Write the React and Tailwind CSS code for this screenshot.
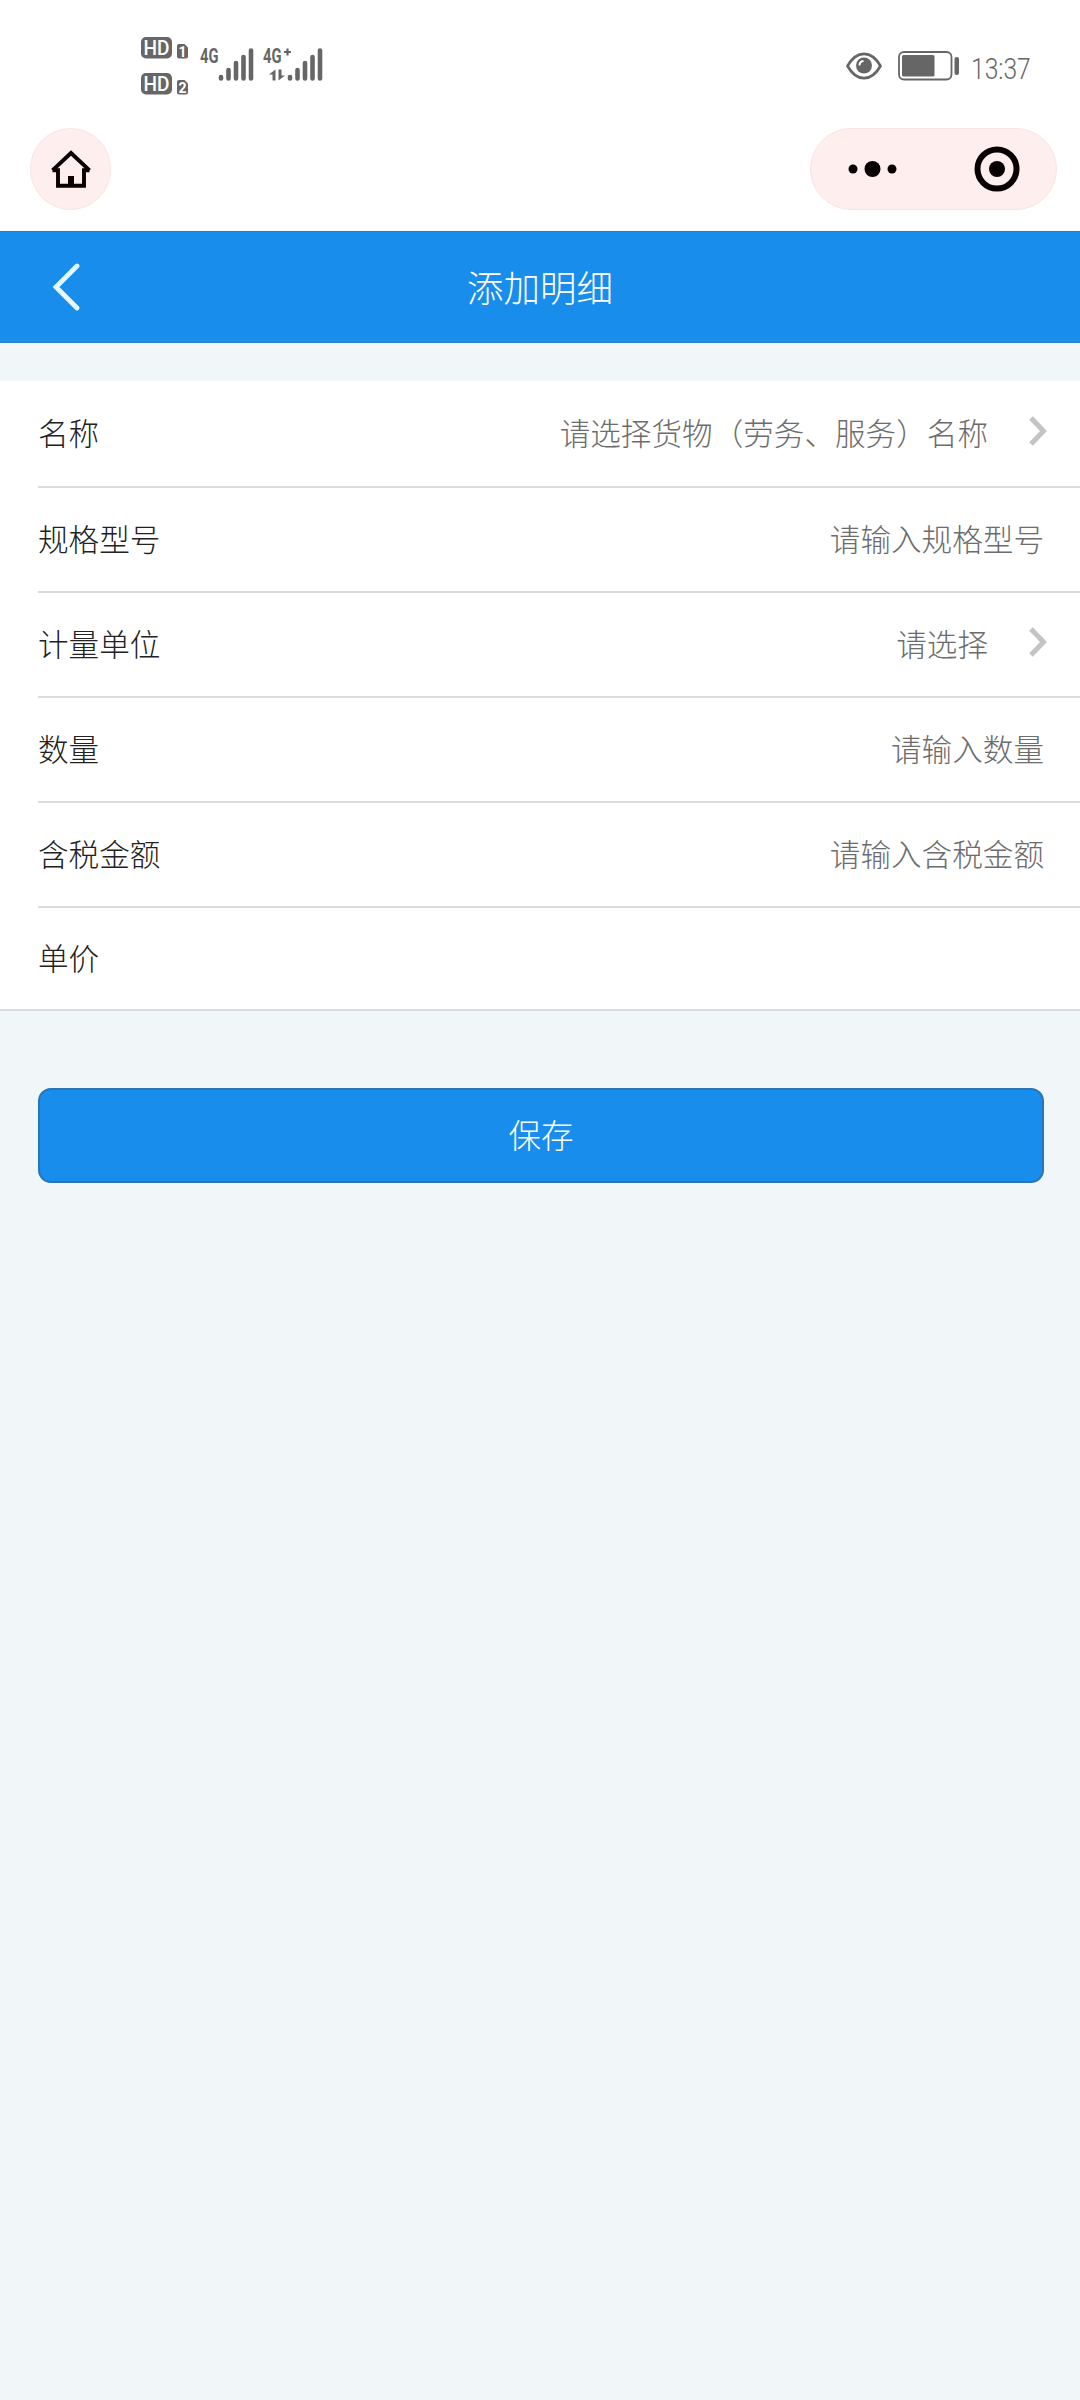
const rows = [
  { label: '名称', hint: '请选择货物（劳务、服务）名称', select: true, box: 'h-[107px] border-b-2' },
  { label: '规格型号', hint: '请输入规格型号', box: 'h-[105px] border-b-2' },
  { label: '计量单位', hint: '请选择', select: true, box: 'h-[105px] border-b-2' },
  { label: '数量', hint: '请输入数量', box: 'h-[105px] border-b-2' },
  { label: '含税金额', hint: '请输入含税金额', box: 'h-[105px] border-b-2' },
  { label: '单价', hint: '', box: 'h-[101px]' },
];

function SimBadge({ y, n }) {
  return (
    <g>
      <rect x="21" y={y} width="31" height="21.5" rx="5" fill="#666" />
      <text x="36.5" y={y + 17.5} fontSize="19.500" fontWeight="500" fill="#fff" textAnchor="middle" textLength="26" lengthAdjust="spacingAndGlyphs">HD</text>
      <path d={`M57 ${y + 9}q0-2 2-2h5.500l3.500 3.500v9q0 2-2 2h-7q-2 0-2-2z`} fill="#666" />
      <text x="62.500" y={y + 19.500} fontSize="14" fontWeight="700" fill="#fff" textAnchor="middle">{n}</text>
    </g>
  );
}

function Bars({ x }) {
  return (
    <g stroke="#666" strokeWidth="4.600" strokeLinecap="round">
      <path d={`M${x} 57v1.500M${x + 7.5} 50v8.500M${x + 15} 43v15.500M${x + 22.5} 37v21.500M${x + 30} 30.500v28`} />
    </g>
  );
}

function Signals() {
  return (
    <svg width="220" height="90" className="font-['Roboto','Liberation_Sans',sans-serif]">
      <SimBadge y={17} n="1" />
      <SimBadge y={53} n="2" />
      <text x="80" y="42.500" fontSize="20" fontWeight="700" fill="#666" textLength="18.500" lengthAdjust="spacingAndGlyphs">4G</text>
      <Bars x={101} />
      <text x="143" y="42.500" fontSize="20" fontWeight="700" fill="#666" textLength="18.500" lengthAdjust="spacingAndGlyphs">4G</text>
      <path d="M164 32h7M167.500 28.500v7" stroke="#666" strokeWidth="2.200" />
      <path d="M155.500 49.500v11h-3v-6h-3.500zM158.500 49.500v11l6.500-5h-3.500v-6z" fill="#666" />
      <Bars x={170} />
    </svg>
  );
}

function Eye() {
  return (
    <svg width="36" height="30" viewBox="0 0 36 30" fill="none">
      <path d="M1.500 15C6 7 11.500 2.800 18 2.800S30 7 34.500 15C30 23 24.500 27.200 18 27.200S6 23 1.500 15z" stroke="#666" strokeWidth="2.700" strokeLinejoin="round" />
      <circle cx="18" cy="14.500" r="8" fill="#666" />
      <path d="M13.500 14.500a4.500 4.500 0 0 1 4-4.500" stroke="#fff" strokeWidth="2" />
    </svg>
  );
}

function Battery() {
  return (
    <svg width="62" height="30" viewBox="0 0 62 30" fill="none">
      <rect x="1" y="1" width="52.500" height="27.500" rx="5" stroke="#666" strokeWidth="1.800" />
      <rect x="4" y="4" width="32.500" height="21.500" rx="1.500" fill="#666" />
      <rect x="56.500" y="6" width="4.500" height="18" rx="2" fill="#666" />
    </svg>
  );
}

export default function App() {
  return (
    <div className="flex h-[2400px] w-[1080px] flex-col overflow-hidden bg-[#f1f6f9] font-['Noto_Sans_CJK_SC',sans-serif] font-light">
      <div className="h-[231px] shrink-0 bg-white">
        <div className="flex h-[128px] items-start justify-between pt-5 pl-[120px]">
          <Signals />
          <div className="flex w-[234px] items-start pt-[31px]">
            <Eye />
            <div className="ml-[15.5px]"><Battery /></div>
            <span className="mt-[2px] ml-[11px] w-0 origin-left scale-x-[0.82] font-['Roboto',sans-serif] text-[30px] leading-[32px] font-light whitespace-nowrap text-[#666]">13:37</span>
          </div>
        </div>
        <div className="flex items-center justify-between pr-[23px] pl-[30px]">
          <div className="flex h-[82px] w-[81px] items-center justify-center rounded-full border border-[#f5e6e6] bg-[#ffeeee]">
            <svg width="44" height="40" viewBox="0 0 44 40" fill="none" className="mt-[2px]">
              <path d="M3.500 20.300 22 3l18.500 17.300M3.500 20.300H9V35.700H35V20.300H40.500" stroke="#0a0000" strokeWidth="3.900" />
              <path d="M19 26h6v9h-6z" fill="#0a0000" />
            </svg>
          </div>
          <div className="flex h-[82px] w-[247px] items-center rounded-full border border-[#f5e6e6] bg-[#ffeeee] pl-[36.5px]">
            <svg width="50" height="18" fill="#080000">
              <circle cx="5" cy="9" r="4.500" />
              <circle cx="24.500" cy="9" r="8" />
              <circle cx="44" cy="9" r="4.500" />
            </svg>
            <svg width="46" height="46" className="ml-[76px]">
              <circle cx="23" cy="23" r="19.500" fill="none" stroke="#080000" strokeWidth="6" />
              <circle cx="23" cy="23" r="8" fill="#080000" />
            </svg>
          </div>
        </div>
      </div>

      <header className="grid h-[112px] shrink-0 grid-cols-[200px_1fr_200px] items-center border-y border-[#2a80be] bg-[#188dec] text-white">
        <svg width="28" height="48" viewBox="0 0 28 48" fill="none" className="ml-[52px]">
          <path d="M25 3 4 24l21 21" stroke="#e6f9ff" strokeWidth="4.800" strokeLinecap="round" />
        </svg>
        <h1 className="pb-px text-center text-[36.5px] leading-[40px] font-light">添加明细</h1>
      </header>

      <section className="mt-[38px] flex shrink-0 flex-col border-b-2 border-[#d8dde0] bg-white pl-[38px]">
        {rows.map((r) => (
          <div key={r.label} className={`flex items-center border-[#dcdcdc] pr-[36px] pb-[4px] text-[30.6px] leading-[40px] ${r.box}`}>
            <span className="flex-1 text-[#222]">{r.label}</span>
            <span className="text-[#6c6c6c]">{r.hint}</span>
            {r.select && (
              <svg width="20" height="30" viewBox="0 0 20 30" fill="none" className="mr-[-4px] mb-[2px] ml-[40px]">
                <path d="M3 2 15.500 15 3 28" stroke="#c4c4c4" strokeWidth="5" />
              </svg>
            )}
          </div>
        ))}
      </section>

      <button className="mt-[77px] mr-[36px] ml-[38px] h-[95px] shrink-0 rounded-[13px] border-2 border-[#2a76b4] bg-[#188dec] pb-[3px] text-[32.5px] leading-[40px] font-light text-white">
        保存
      </button>
    </div>
  );
}
